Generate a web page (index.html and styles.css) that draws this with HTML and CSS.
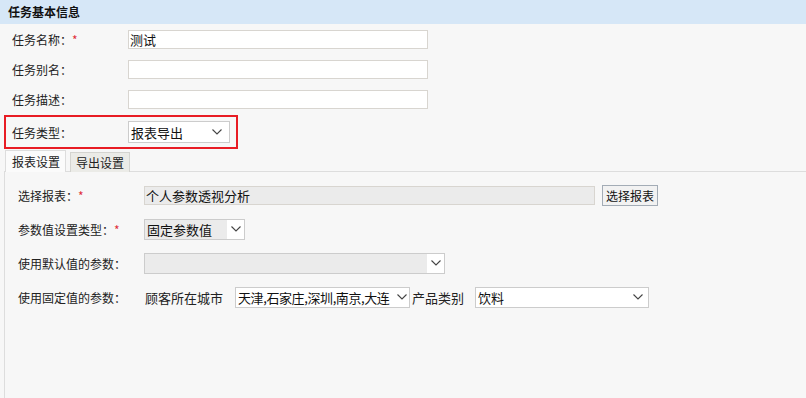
FILE: index.html
```html
<!DOCTYPE html>
<html lang="zh">
<head>
<meta charset="utf-8">
<link rel="stylesheet" href="styles.css">
</head>
<body>
<div class="header">任务基本信息</div>
<div class="basic">
  <div class="row">
    <div class="label">任务名称：<span class="req">*</span></div>
    <div class="input">测试</div>
  </div>
  <div class="row">
    <div class="label">任务别名：</div>
    <div class="input"></div>
  </div>
  <div class="row">
    <div class="label">任务描述：</div>
    <div class="input"></div>
  </div>
</div>
<div class="typebox">
  <div class="label">任务类型：</div>
  <div class="select sel-type"><span class="val">报表导出</span><span class="arrow"><svg width="10" height="6" viewBox="0 0 10 6"><path d="M0.5 0.5 L5 5 L9.5 0.5" fill="none" stroke="#444" stroke-width="1.1"/></svg></span></div>
</div>
<div class="tabs">
  <div class="tab active">报表设置</div>
  <div class="tab">导出设置</div>
</div>
<div class="panel">
  <div class="prow">
    <div class="plabel">选择报表：<span class="req">*</span></div>
    <div class="input gray rep">个人参数透视分析</div>
    <div class="btn">选择报表</div>
  </div>
  <div class="prow">
    <div class="plabel">参数值设置类型：<span class="req">*</span></div>
    <div class="select gsel sel-ptype"><span class="val">固定参数值</span><span class="arrow"><svg width="10" height="6" viewBox="0 0 10 6"><path d="M0.5 0.5 L5 5 L9.5 0.5" fill="none" stroke="#444" stroke-width="1.1"/></svg></span></div>
  </div>
  <div class="prow">
    <div class="plabel">使用默认值的参数：</div>
    <div class="select gsel sel-def"><span class="val"></span><span class="arrow"><svg width="10" height="6" viewBox="0 0 10 6"><path d="M0.5 0.5 L5 5 L9.5 0.5" fill="none" stroke="#444" stroke-width="1.1"/></svg></span></div>
  </div>
  <div class="prow">
    <div class="plabel">使用固定值的参数：</div>
    <div class="ptext">顾客所在城市</div>
    <div class="select sel-city"><span class="val">天津,石家庄,深圳,南京,大连</span><span class="arrow"><svg width="10" height="6" viewBox="0 0 10 6"><path d="M0.5 0.5 L5 5 L9.5 0.5" fill="none" stroke="#444" stroke-width="1.1"/></svg></span></div>
    <div class="ptext ptext2">产品类别</div>
    <div class="select sel-prod"><span class="val">饮料</span><span class="arrow"><svg width="10" height="6" viewBox="0 0 10 6"><path d="M0.5 0.5 L5 5 L9.5 0.5" fill="none" stroke="#444" stroke-width="1.1"/></svg></span></div>
  </div>
</div>
</body>
</html>
```
FILE: styles.css
```css
html, body {
  margin: 0;
  padding: 0;
  background: #f7f7f7;
  height: 100%;
  overflow: hidden;
}
body {
  font-family: "Microsoft YaHei", "Noto Sans CJK SC", sans-serif;
  font-size: 12px;
  color: #222;
  display: flex;
  flex-direction: column;
}
.header {
  flex: none;
  height: 24px;
  line-height: 24px;
  background: #d6e7f7;
  padding-left: 8px;
  font-weight: bold;
  font-size: 12px;
  color: #111;
}
.basic {
  flex: none;
  padding-top: 6px;
  display: flex;
  flex-direction: column;
  gap: 11px;
}
.row {
  display: flex;
  align-items: center;
  height: 19px;
}
.label {
  width: 116px;
  padding-left: 12px;
  color: #222;
}
.req {
  color: #e0303a;
}
.input {
  box-sizing: border-box;
  height: 19px;
  width: 300px;
  border: 1px solid #d8d5d0;
  background: #fff;
  font-size: 13px;
  line-height: 17px;
  padding-left: 1px;
  color: #111;
  white-space: nowrap;
}
.typebox {
  flex: none;
  box-sizing: border-box;
  margin: 6px 0 0 4px;
  width: 234px;
  height: 34px;
  border: 2px solid #e81c24;
  display: flex;
  align-items: center;
}
.typebox .label {
  width: 116px;
  padding-left: 6px;
}
.select {
  box-sizing: border-box;
  display: flex;
  align-items: stretch;
  border: 1px solid #ccc;
  background: #fff;
  font-size: 13px;
  color: #111;
}
.select .val {
  flex: 1;
  min-width: 0;
  padding-left: 2px;
  white-space: nowrap;
  overflow: hidden;
  display: flex;
  align-items: center;
}
.select .arrow {
  flex: none;
  width: 17px;
  display: flex;
  align-items: center;
  justify-content: center;
  background: #fff;
}
.sel-type {
  width: 102px;
  height: 22px;
}
.sel-type .arrow {
  width: 24px;
}
.tabs {
  flex: none;
  display: flex;
  align-items: flex-end;
  margin-left: 5px;
  margin-top: 1px;
  height: 22px;
  position: relative;
  z-index: 1;
}
.tab {
  box-sizing: border-box;
  height: 20px;
  line-height: 19px;
  padding: 0 5px 0 5px;
  border: 1px solid #d4d4d0;
  border-bottom: none;
  background: #ebebe7;
  font-size: 12px;
  color: #222;
  margin-right: 5px;
  white-space: nowrap;
}
.tab.active {
  height: 22px;
  line-height: 22px;
  background: #fbfbfb;
  border-color: #ddd;
  padding: 0 5px 0 6px;
  margin-right: 4px;
}
.panel {
  flex: 1;
  margin-left: 4px;
  margin-top: -1px;
  border-left: 1px solid #ddd;
  border-top: 1px solid #ddd;
  padding: 12px 0 0 13px;
  display: flex;
  flex-direction: column;
  gap: 12px;
  box-sizing: border-box;
  min-height: 0;
}
.prow {
  display: flex;
  align-items: center;
  height: 22px;
}
.plabel {
  width: 126px;
  color: #222;
}
.input.gray {
  background: #ebebeb;
  border-color: #d8d5d0;
}
.rep {
  width: 451px;
  height: 19px;
}
.btn {
  box-sizing: border-box;
  margin-left: 7px;
  height: 21px;
  line-height: 19px;
  padding: 0 3px;
  border: 1px solid #a3acb6;
  background: #f2f2f2;
  font-size: 12px;
  color: #111;
}
.gsel .val {
  background: #ebebeb;
}
.sel-ptype {
  width: 101px;
  height: 21px;
}
.sel-def {
  width: 301px;
  height: 21px;
}
.ptext {
  font-size: 13px;
  color: #222;
  width: 90px;
  padding-left: 1px;
}
.ptext2 {
  width: 63px;
  padding-left: 2px;
}
.sel-city {
  width: 175px;
  height: 21px;
}
.sel-city .val {
  letter-spacing: -0.4px;
}
.sel-city .arrow {
  width: 14px;
}
.sel-prod {
  width: 174px;
  height: 21px;
}
.sel-prod .arrow {
  width: 20px;
}
```
